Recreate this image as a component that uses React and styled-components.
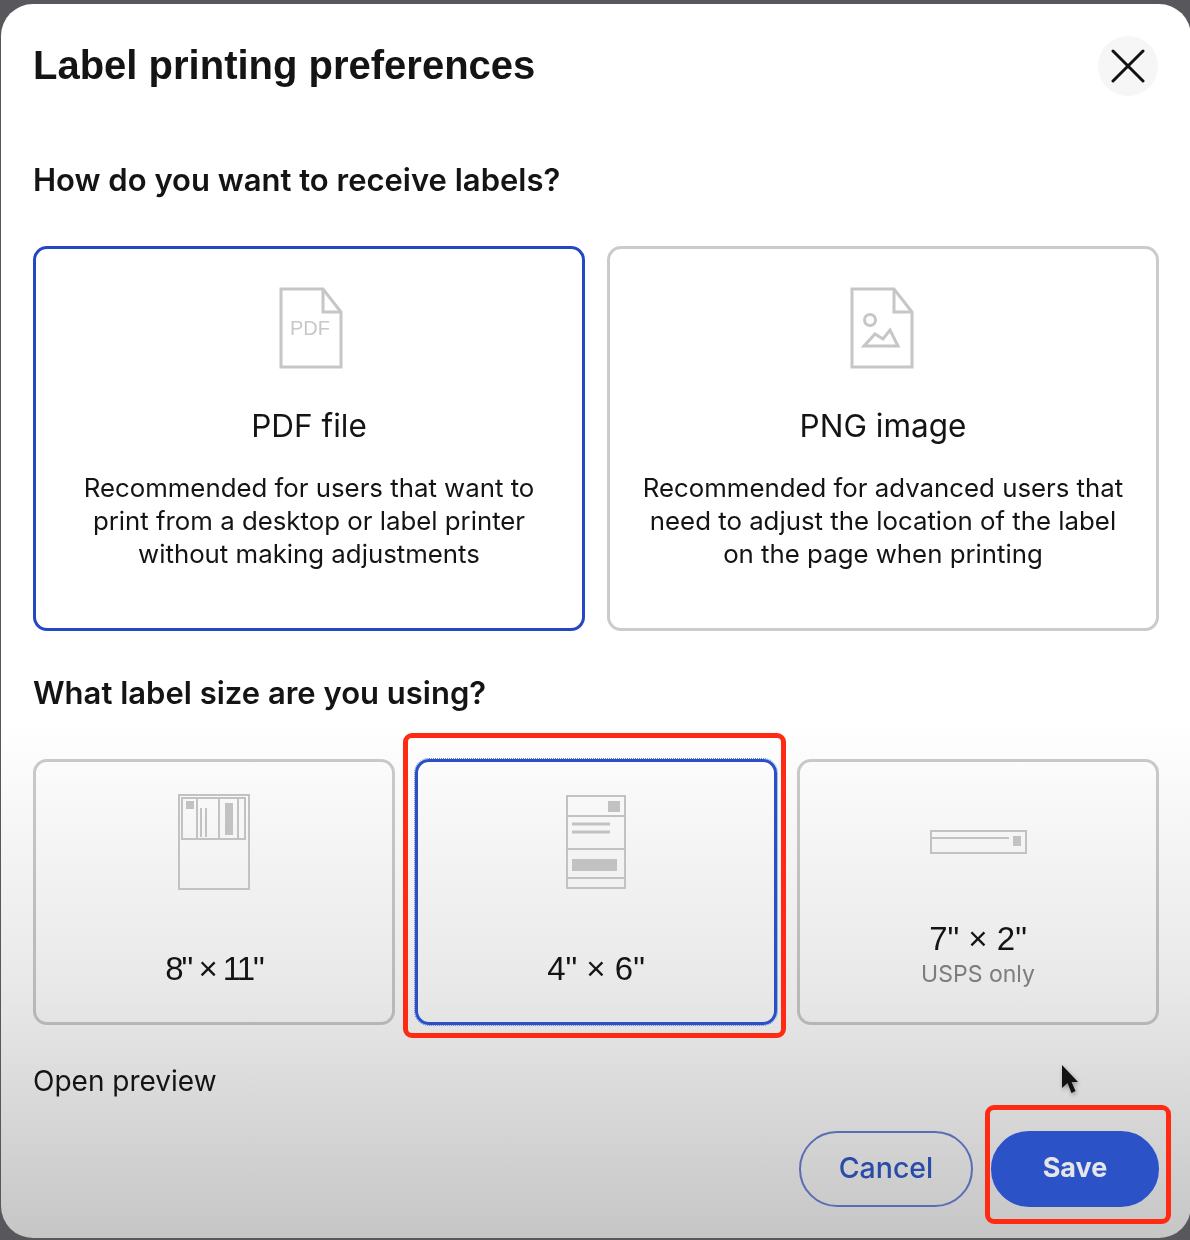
import React from "react";
import styled, { createGlobalStyle } from "styled-components";

const GlobalStyle = createGlobalStyle`
  html, body {
    margin: 0;
    height: 1240px;
    overflow: hidden;
    background: #58585c;
  }
  * { box-sizing: border-box; }
`;

const Page = styled.div`
  position: relative;
  width: 1190px;
  height: 1240px;
  padding: 4px 0 2px 1px;
  font-family: "Inter", "Liberation Sans", sans-serif;
  color: #141414;
  overflow: hidden;
`;

const Modal = styled.div`
  width: 1190px;
  height: 1234px;
  padding: 32px 32px 0;
  border-radius: 32px;
  background: linear-gradient(180deg, #ffffff 0%, #ffffff 58%, #e8e8e8 80%, #c6c6c6 100%);
  filter: blur(0.35px);
`;

const Header = styled.div`
  display: flex;
  justify-content: space-between;
  align-items: flex-start;
  height: 60px;
`;

const Title = styled.h1`
  margin: 0;
  font-family: "Liberation Sans", sans-serif;
  font-size: 40px;
  line-height: 58px;
  font-weight: 700;
`;

const CloseButton = styled.button`
  width: 60px;
  height: 60px;
  margin-right: 1px;
  padding: 0;
  border: 0;
  border-radius: 50%;
  background: #f6f6f6;
  display: flex;
  align-items: center;
  justify-content: center;
`;

const Question = styled.h2`
  margin: ${(p) => p.$top}px 0 46px;
  font-size: 31px;
  line-height: 40px;
  font-weight: 600;
`;

const FormatRow = styled.div`
  display: grid;
  grid-template-columns: 552px 552px;
  column-gap: 22px;
`;

const FormatCard = styled.div`
  height: 385px;
  padding: 38px 20px 0;
  border: 3px solid ${(p) => (p.$selected ? "#2447c5" : "#cbcbcb")};
  border-radius: 14px;
  display: flex;
  flex-direction: column;
  align-items: center;
  text-align: center;
`;

const FormatName = styled.div`
  margin-top: 37px;
  font-size: 31.5px;
  line-height: 40px;
  font-weight: 400;
`;

const FormatText = styled.div`
  margin-top: 25px;
  font-size: 25.8px;
  line-height: 33px;
  white-space: pre-line;
`;

const DocIcon = styled.svg`
  margin-left: ${(p) => p.$shift}px;
`;

const SizeRow = styled.div`
  display: grid;
  grid-template-columns: repeat(3, 362px);
  column-gap: 20px;
`;

const SizeCard = styled.div`
  height: 266px;
  padding: 32px 0 33px;
  border: 3px solid ${(p) => (p.$selected ? "#2a50c8" : "rgba(0, 0, 0, 0.2)")};
  outline: ${(p) => (p.$selected ? "1px dotted #5c7bd8" : "none")};
  border-radius: 14px;
  display: flex;
  flex-direction: column;
  align-items: center;
  justify-content: space-between;
`;

const SizeIcon = styled.div`
  height: 96px;
  display: flex;
  align-items: center;
  justify-content: center;
`;

const SizeText = styled.div`
  text-align: center;
`;

const SizeName = styled.div`
  font-family: "Liberation Sans", sans-serif;
  font-size: 33px;
  line-height: 40px;
  letter-spacing: ${(p) => (p.$tight ? "-2px" : "0")};
`;

const SizeNote = styled.div`
  font-size: 23px;
  line-height: 30px;
  color: #7d7d7d;
`;

const PreviewLink = styled.div`
  margin-top: 38px;
  font-size: 28px;
  line-height: 36px;
`;

const Actions = styled.div`
  margin-top: 32px;
  display: flex;
  justify-content: flex-end;
  gap: 18px;
`;

const Pill = styled.button`
  width: ${(p) => (p.$primary ? 168 : 174)}px;
  height: 76px;
  padding: 0 0 3px;
  border-radius: 38px;
  border: 2px solid ${(p) => (p.$primary ? "#2c52c8" : "#5a6cb4")};
  background: ${(p) => (p.$primary ? "#2c52c8" : "transparent")};
  color: ${(p) => (p.$primary ? "#e6e6e6" : "#2a4ca8")};
  font-family: inherit;
  font-size: ${(p) => (p.$primary ? 27 : 28.5)}px;
  font-weight: ${(p) => (p.$primary ? 700 : 500)};
`;

// red marks drawn over the screenshot
const Highlight = styled.div`
  position: absolute;
  left: ${(p) => p.$x}px;
  top: ${(p) => p.$y}px;
  width: ${(p) => p.$w}px;
  height: ${(p) => p.$h}px;
  border: 5px solid #ff2a12;
  border-radius: 9px;
`;

const Cursor = styled.svg`
  position: absolute;
  left: 1058px;
  top: 1062px;
  filter: drop-shadow(1px 2px 2px rgba(0, 0, 0, 0.35));
`;

const line = { fill: "none", stroke: "#c6c6c6", strokeWidth: 3 };
const thin = { fill: "none", stroke: "#c2c2c2", strokeWidth: 2 };

const PdfIcon = () => (
  <DocIcon $shift={3} width="64" height="82" viewBox="0 0 64 82">
    <path {...line} d="M2 2H44L62 25V80H2Z" />
    <path {...line} d="M44 2V25H62" />
    <text x="31" y="48" textAnchor="middle" fontFamily="Liberation Sans" fontSize="20" fill="#c8c8c8">PDF</text>
  </DocIcon>
);

const PngIcon = () => (
  <DocIcon $shift={-2} width="64" height="82" viewBox="0 0 64 82">
    <path {...line} d="M2 2H44L62 25V80H2Z" />
    <path {...line} d="M44 2V25H62" />
    <circle {...line} cx="20" cy="33" r="5.5" />
    <path {...line} d="M14 59L25 47L33 52L40 43L48 59Z" />
  </DocIcon>
);

const LetterIcon = () => (
  <svg width="72" height="96" viewBox="0 0 72 96">
    <rect {...thin} x="1" y="1" width="70" height="94" />
    <rect {...thin} x="4" y="4" width="63" height="41" />
    <path {...thin} d="M19 4V45M41 4V45M60 4V45M23 14V43M28 14V43" />
    <rect x="8" y="7" width="8" height="8" fill="#c2c2c2" />
    <rect x="47" y="9" width="8" height="32" fill="#c2c2c2" />
  </svg>
);

const FourBySixIcon = () => (
  <svg width="60" height="94" viewBox="0 0 60 94">
    <rect {...thin} x="1" y="1" width="58" height="92" />
    <path {...thin} d="M1 21H59M1 54H59M1 83H59" />
    <path fill="none" stroke="#c2c2c2" strokeWidth="3" d="M6 29H44M6 37H44" />
    <rect x="42" y="6" width="12" height="11" fill="#c2c2c2" />
    <rect x="6" y="64" width="45" height="12" fill="#c2c2c2" />
  </svg>
);

const SevenByTwoIcon = () => (
  <svg width="97" height="24" viewBox="0 0 97 24">
    <rect {...thin} x="1" y="1" width="95" height="22" />
    <path {...thin} d="M1 8H79" />
    <rect x="83" y="6" width="8" height="10" fill="#c2c2c2" />
  </svg>
);

export default function App() {
  return (
    <Page>
      <GlobalStyle />
      <Modal>
        <Header>
          <Title>Label printing preferences</Title>
          <CloseButton>
            <svg width="34" height="34" viewBox="0 0 34 34">
              <path d="M2 2L32 32M32 2L2 32" stroke="#111" strokeWidth="3" strokeLinecap="round" />
            </svg>
          </CloseButton>
        </Header>

        <Question $top={64}>How do you want to receive labels?</Question>
        <FormatRow>
          <FormatCard $selected>
            <PdfIcon />
            <FormatName>PDF file</FormatName>
            <FormatText>{"Recommended for users that want to\nprint from a desktop or label printer\nwithout making adjustments"}</FormatText>
          </FormatCard>
          <FormatCard>
            <PngIcon />
            <FormatName>PNG image</FormatName>
            <FormatText>{"Recommended for advanced users that\nneed to adjust the location of the label\non the page when printing"}</FormatText>
          </FormatCard>
        </FormatRow>

        <Question $top={42}>What label size are you using?</Question>
        <SizeRow>
          <SizeCard>
            <SizeIcon><LetterIcon /></SizeIcon>
            <SizeText><SizeName $tight>8" × 11"</SizeName></SizeText>
          </SizeCard>
          <SizeCard $selected>
            <SizeIcon><FourBySixIcon /></SizeIcon>
            <SizeText><SizeName>4" × 6"</SizeName></SizeText>
          </SizeCard>
          <SizeCard>
            <SizeIcon><SevenByTwoIcon /></SizeIcon>
            <SizeText>
              <SizeName>7" × 2"</SizeName>
              <SizeNote>USPS only</SizeNote>
            </SizeText>
          </SizeCard>
        </SizeRow>

        <PreviewLink>Open preview</PreviewLink>
        <Actions>
          <Pill>Cancel</Pill>
          <Pill $primary>Save</Pill>
        </Actions>
      </Modal>

      <Highlight $x={403} $y={733} $w={383} $h={305} />
      <Highlight $x={985} $y={1105} $w={186} $h={119} />
      <Cursor width="22" height="34" viewBox="0 0 22 34">
        <path d="M4 3V26L9.5 21L13.5 31L17.5 29L13.5 20H20Z" fill="#111" />
      </Cursor>
    </Page>
  );
}
